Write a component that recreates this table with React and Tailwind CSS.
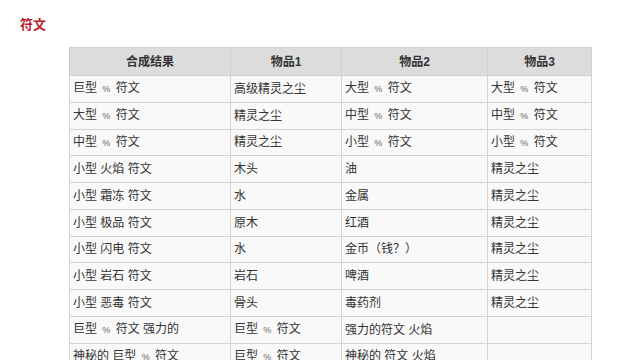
const rows = [
  ["巨型 % 符文", "高级精灵之尘", "大型 % 符文", "大型 % 符文"],
  ["大型 % 符文", "精灵之尘", "中型 % 符文", "中型 % 符文"],
  ["中型 % 符文", "精灵之尘", "小型 % 符文", "小型 % 符文"],
  ["小型 火焰 符文", "木头", "油", "精灵之尘"],
  ["小型 霜冻 符文", "水", "金属", "精灵之尘"],
  ["小型 极品 符文", "原木", "红酒", "精灵之尘"],
  ["小型 闪电 符文", "水", "金币（钱？）", "精灵之尘"],
  ["小型 岩石 符文", "岩石", "啤酒", "精灵之尘"],
  ["小型 恶毒 符文", "骨头", "毒药剂", "精灵之尘"],
  ["巨型 % 符文 强力的", "巨型 % 符文", "强力的符文 火焰", ""],
  ["神秘的 巨型 % 符文", "巨型 % 符文", "神秘的 符文 火焰", ""],
];

// the "%" placeholder is drawn small and light in the source page
function Cell({ text }) {
  const parts = text.split("%");
  return parts.map((p, k) => (
    <span key={k}>
      {p}
      {k < parts.length - 1 && (
        <span className="mx-[2px] text-[9px] text-[#666]">%</span>
      )}
    </span>
  ));
}

export default function App() {
  return (
    <div
      className="w-[640px] h-[360px] overflow-hidden bg-white text-[#333]"
      style={{ fontFamily: '"Liberation Sans", "Noto Sans CJK SC", sans-serif' }}
    >
      <h2 className="pl-[20px] pt-[16px] text-[13px] font-bold leading-[18px] text-[#b5222a]">
        符文
      </h2>

      <table className="ml-[69px] mt-[13px] w-[523px] border-collapse text-[12px] leading-[14px]">
        <thead>
          <tr className="h-[28px] bg-[#dcdcdc]">
            <th className="w-[161px] border border-[#cfcfcf] font-bold">合成结果</th>
            <th className="w-[111px] border border-[#cfcfcf] font-bold">物品1</th>
            <th className="w-[146px] border border-[#cfcfcf] font-bold">物品2</th>
            <th className="border border-[#cfcfcf] font-bold">物品3</th>
          </tr>
        </thead>
        <tbody>
          {rows.map((row, i) => (
            <tr key={i} className="h-[26.75px] bg-[#f9f9f9]">
              {row.map((cell, j) => (
                <td key={j} className="border border-[#d4d4d4] pl-[3px] text-left font-normal">
                  <Cell text={cell} />
                </td>
              ))}
            </tr>
          ))}
        </tbody>
      </table>
    </div>
  );
}
